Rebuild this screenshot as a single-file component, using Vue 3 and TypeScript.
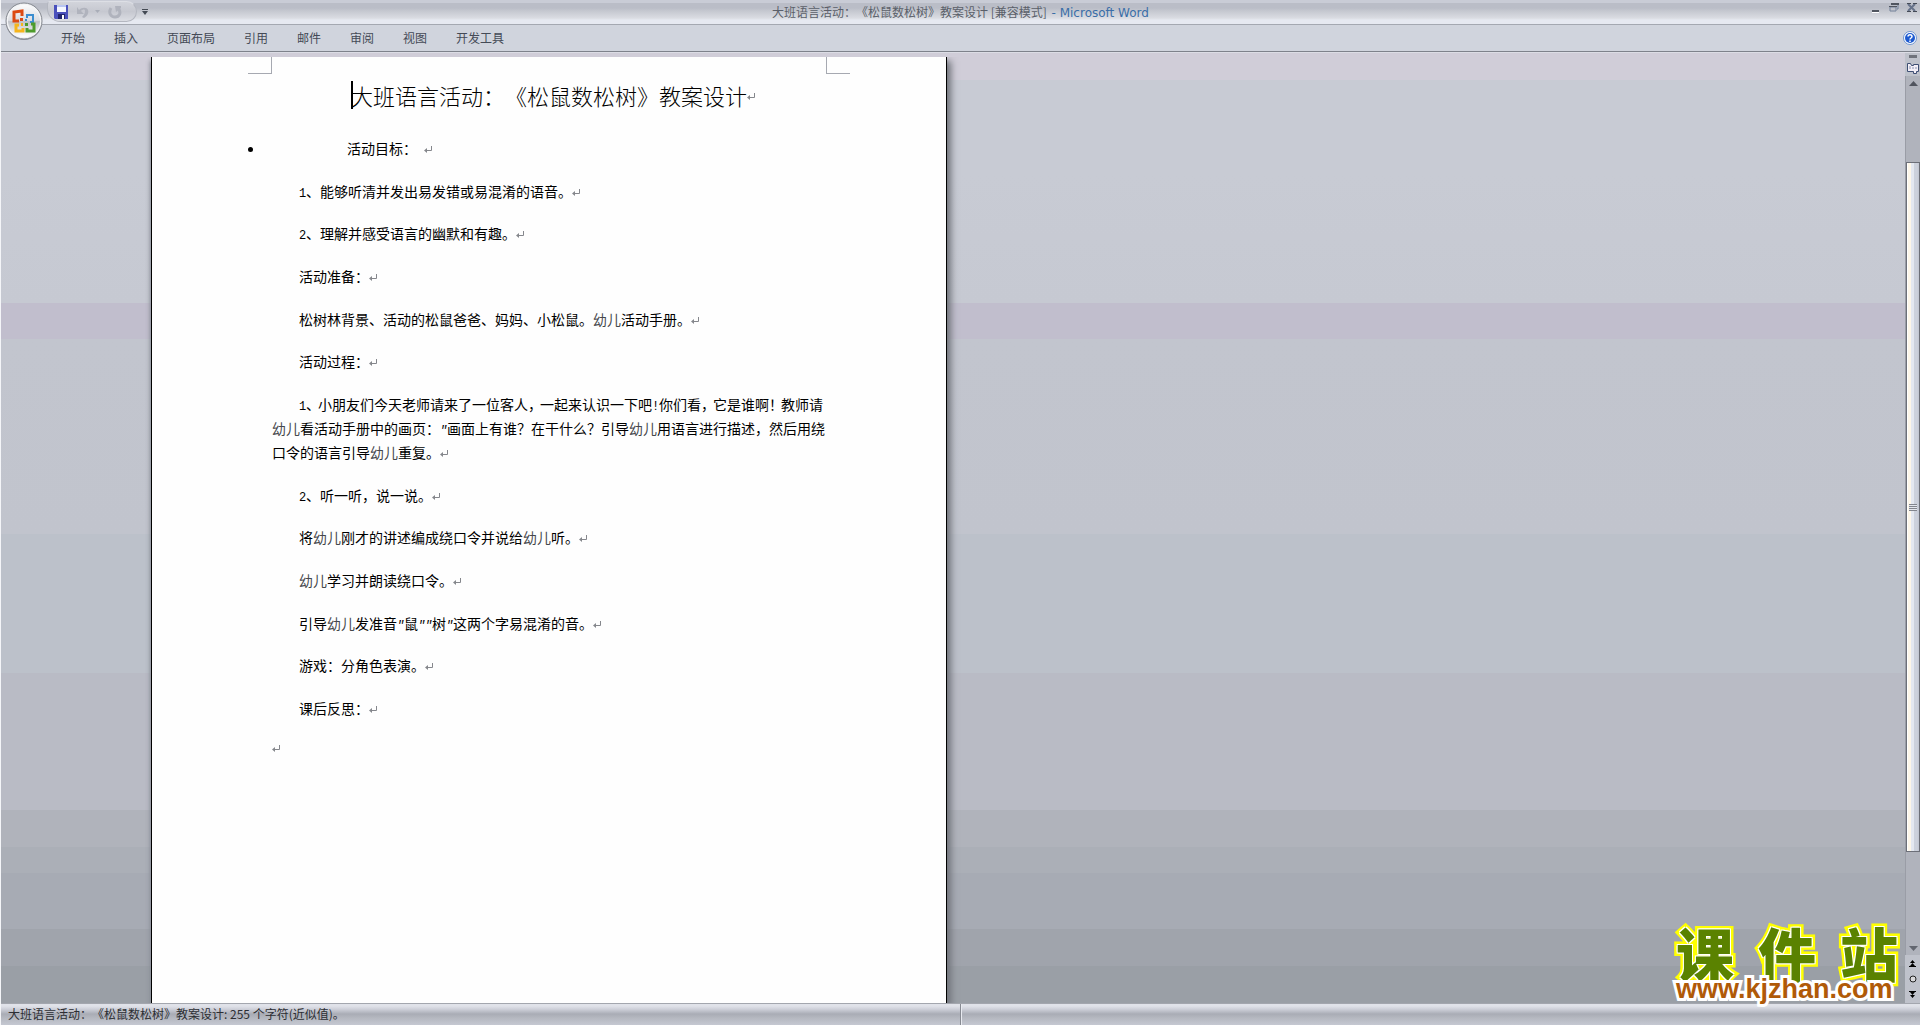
<script setup lang="ts">
interface Run {
  text: string
  kind?: 'soft' | 'half' | 'half quote' | 'tight'
}
interface Paragraph {
  lines: string[]
  flush?: boolean
}

const tabs: string[] = ['开始', '插入', '页面布局', '引用', '邮件', '审阅', '视图', '开发工具']

// A "~" after a punctuation mark asks for compressed spacing.
const paragraphs: Paragraph[] = [
  { lines: ['1、能够听清并发出易发错或易混淆的语音。'] },
  { lines: ['2、理解并感受语言的幽默和有趣。'] },
  { lines: ['活动准备：'] },
  { lines: ['松树林背景、活动的松鼠爸爸、妈妈、小松鼠。幼儿活动手册。'] },
  { lines: ['活动过程：'] },
  {
    lines: [
      '1、~小朋友们今天老师请来了一位客人，~一起来认识一下吧!你们看，~它是谁啊！~教师请',
      '幼儿看活动手册中的画页："画面上有谁？在干什么？引导幼儿用语言进行描述，然后用绕',
      '口令的语言引导幼儿重复。',
    ],
  },
  { lines: ['2、听一听，说一说。'] },
  { lines: ['将幼儿刚才的讲述编成绕口令并说给幼儿听。'] },
  { lines: ['幼儿学习并朗读绕口令。'] },
  { lines: ['引导幼儿发准音"鼠""树"这两个字易混淆的音。'] },
  { lines: ['游戏：分角色表演。'] },
  { lines: ['课后反思：'] },
  { lines: [''], flush: true },
]

function runs(line: string): Run[] {
  return line
    .split(/(幼儿|[12!"]|[、，！]~)/)
    .filter((part) => part !== '')
    .map((part): Run => {
      if (part === '幼儿') return { text: part, kind: 'soft' }
      if (part.endsWith('~')) return { text: part.slice(0, -1), kind: 'tight' }
      if (part === '"') return { text: part, kind: 'half quote' }
      if (/^[12!]$/.test(part)) return { text: part, kind: 'half' }
      return { text: part }
    })
}
</script>

<template>
  <div class="word">
    <header class="titlebar">
      <div class="quick">
        <button class="tool" aria-label="保存">
          <svg width="14" height="14" viewBox="0 0 14 14">
            <path d="M0 0h14v14H1L0 13z" fill="#4a50bc" />
            <path d="M3 0h9v7H3z" fill="#f4f7ff" />
            <path d="M3 0h9v2H3z" fill="#b9c6f2" />
            <path d="M4 9h7v5H4z" fill="#20246e" />
            <path d="M8 10h2v4H8z" fill="#fff" />
          </svg>
        </button>
        <button class="tool undo" aria-label="撤消">
          <svg width="14" height="14" viewBox="0 0 14 14">
            <path d="M1 2v7h7L5 6c2-2 4-2 4 0s-1 4-3 6l2 1c3-2 5-4 4-8-1-3-6-3-9 0z" fill="#b0b3bd" />
          </svg>
        </button>
        <svg class="caret-down" width="5" height="3" viewBox="0 0 5 3"><path d="M0 0h5L2.500 3z" fill="#a9adb8" /></svg>
        <button class="tool" aria-label="恢复">
          <svg width="14" height="14" viewBox="0 0 14 14">
            <path d="M3 3C0 8 3 12 7 12s7-4 3-9" fill="none" stroke="#b0b3bd" stroke-width="3" />
            <path d="M7 1h6v2L8 7z" fill="#b0b3bd" />
          </svg>
        </button>
      </div>
      <button class="customize" aria-label="自定义快速访问工具栏">
        <svg width="6" height="6" viewBox="0 0 6 6"><path d="M0 0h6v1H0zM0 2h6L3 6z" fill="#444a54" /></svg>
      </button>
      <div class="caption">大班语言活动：《松鼠数松树》教案设计 [兼容模式] <span class="app-name">- Microsoft Word</span></div>
      <div class="window-buttons">
        <button aria-label="最小化">
          <svg width="10" height="10" viewBox="0 0 10 10"><path d="M1 7h7v2H1z" fill="#50555f" /><path d="M1 9h7v1H1z" fill="#fff" /></svg>
        </button>
        <button aria-label="还原">
          <svg width="10" height="10" viewBox="0 0 10 10">
            <path d="M3 1h6v5H8M1 4h6v4H1z" fill="none" stroke="#74829a" />
            <path d="M2 0h8v2H2zM0 3h8v1H0z" fill="#50555f" />
          </svg>
        </button>
        <button aria-label="关闭">
          <svg width="10" height="10" viewBox="0 0 10 10"><path d="M1 1l7 7M8 1L1 8" stroke="#66728a" stroke-width="2" /><path d="M0 0h4v1H0zM6 0h4v1H6zM0 8h4v1H0zM6 8h4v1H6z" fill="#444a55" /></svg>
        </button>
      </div>
      <button class="office" aria-label="Office 按钮">
        <svg width="40" height="40" viewBox="0 0 40 40">
          <defs>
            <linearGradient id="orb" x1="0" y1="0" x2="0" y2="1">
              <stop offset="0" stop-color="#fbfbfc" />
              <stop offset=".48" stop-color="#dcdee2" />
              <stop offset=".52" stop-color="#bfc2c9" />
              <stop offset="1" stop-color="#fff" />
            </linearGradient>
          </defs>
          <circle cx="20" cy="21" r="18" fill="#8c9099" />
          <circle cx="20" cy="20" r="18" fill="#f3f4f6" stroke="#83878f" />
          <circle cx="20" cy="20" r="16" fill="url(#orb)" />
          <g fill="none" stroke-width="3">
            <path d="M18 15v-5l-8 1v9h5" stroke="#dc4a12" />
            <path d="M23 17v-3h6v7h-3" stroke="#3c8ed0" stroke-width="2" />
            <path d="M15 24h-3v6h7v-3" stroke="#f5b51c" />
            <path d="M23 27v3h7v-7h-3" stroke="#4e9c2c" />
          </g>
          <path d="M16 17h3v3h-3z" fill="#dc4a12" /><path d="M21 18h2v2h-2z" fill="#3c8ed0" />
          <path d="M17 22h2v3h-2z" fill="#f5b51c" /><path d="M21 22h3v3h-3z" fill="#4e9c2c" />
        </svg>
      </button>
    </header>

    <nav class="ribbon">
      <button v-for="tab in tabs" :key="tab" class="tab">{{ tab }}</button>
      <button class="help" aria-label="帮助">
        <svg width="14" height="14" viewBox="0 0 14 14">
          <circle cx="7" cy="7" r="6.500" fill="#fff" stroke="#6f94cf" />
          <circle cx="7" cy="7" r="5" fill="#1d5ad0" />
          <path d="M5 5.500c0-2.500 4-2.500 4 0C9 7 7 7 7 8.500M7 9.500V11" fill="none" stroke="#fff" stroke-width="1.500" />
        </svg>
      </button>
    </nav>

    <main class="workspace">
      <article class="page">
        <i class="crop left"></i>
        <i class="crop right"></i>
        <h1><span class="caret"></span>大班语言活动：《松鼠数松树》教案设计<svg class="mark end" width="8" height="8" viewBox="0 0 8 8"><use href="#return" /></svg></h1>
        <ul>
          <li>活动目标：<svg class="mark spaced" width="8" height="8" viewBox="0 0 8 8"><g id="return"><path d="M7.500 0v4.500H2" fill="none" stroke="#85878c" /><path d="M0 4.500L3 2v5z" fill="#85878c" /></g></svg></li>
        </ul>
        <p v-for="(para, p) in paragraphs" :key="p" :class="{ flush: para.flush }">
          <span v-for="(line, n) in para.lines" :key="n" class="line"><span v-for="(run, r) in runs(line)" :key="r" :class="run.kind">{{ run.text }}</span><svg v-if="n === para.lines.length - 1" class="mark" width="8" height="8" viewBox="0 0 8 8"><use href="#return" /></svg></span>
        </p>
      </article>

      <aside class="scroll">
        <div class="split"></div>
        <button class="ruler" aria-label="标尺">
          <svg width="12" height="12" viewBox="0 0 12 12"><path d="M.500 1.500h3l1 2h2v-1h5v7h-2v2h-3v-2h-6z" fill="#f3eef6" stroke="#3f4f74" /><path d="M3 4v3M6 5v2M9 5v2" stroke="#8a96b4" /></svg>
        </button>
        <div class="track">
          <button aria-label="向上滚动"><svg width="9" height="5" viewBox="0 0 9 5"><path d="M0 5h9L4.500 0z" fill="#50545e" /></svg></button>
          <div class="thumb"><span class="grip"></span></div>
          <button class="down" aria-label="向下滚动"><svg width="9" height="5" viewBox="0 0 9 5"><path d="M0 0h9L4.500 5z" fill="#62666f" /></svg></button>
        </div>
        <div class="browse">
          <button aria-label="前一页"><svg width="7" height="7" viewBox="0 0 7 7"><path d="M1 3l2.500-3L6 3zM1 6l2.500-3L6 6zM0 6h7v1H0z" /></svg></button>
          <button aria-label="选择浏览对象"><svg width="8" height="8" viewBox="0 0 8 8"><circle cx="4" cy="4" r="3" fill="#d9d9dc" stroke="#222" /></svg></button>
          <button aria-label="下一页"><svg width="7" height="7" viewBox="0 0 7 7"><path d="M1 1l2.500 3L6 1zM1 4l2.500 3L6 4zM0 0h7v1H0z" /></svg></button>
        </div>
      </aside>

      <div class="brand">
        <div class="brand-name"><span>课</span><span>件</span><span>站</span></div>
        <div class="brand-url">www.kjzhan.com</div>
      </div>
    </main>

    <footer class="status">
      <div class="status-text">大班语言活动：《松鼠数松树》教案设计: 255 个字符(近似值)。</div>
      <div class="status-rest"></div>
    </footer>
  </div>
</template>

<style>
body {
  margin: 0;
}
</style>

<style scoped>
.word {
  display: flex;
  flex-direction: column;
  min-height: 100vh;
  box-sizing: border-box;
  border-left: 1px solid #f4f5f8;
  font: 12px/16px "Noto Sans CJK SC", sans-serif;
  text-spacing-trim: space-all;
  color: #444a56;
}
button {
  padding: 0;
  border: 0;
  background: none;
  font: inherit;
  color: inherit;
}
svg {
  display: block;
}
.titlebar {
  position: relative;
  display: flex;
  align-items: flex-start;
  height: 24px;
  padding-left: 46px;
  border-bottom: 1px solid #a4a8b1;
  background: linear-gradient(#c9ccd6 0 3px, #babdc7 3px 8px, #c5c8d0 11px, #dadce2 18px, #e6e9f1 20px 24px);
}
.quick {
  display: flex;
  align-items: center;
  box-sizing: border-box;
  width: 90px;
  height: 21px;
  margin-top: 1px;
  padding-left: 6px;
  border: 1px solid #b4b7c0;
  border-top-color: #dddfe5;
  border-radius: 4px 11px 11px 14px;
  background: linear-gradient(#d2d4db, #c6c8d0 50%, #dbdde3);
}
.undo {
  margin-left: 8px;
}
.caret-down {
  margin: 0 8px 0 5px;
}
.customize {
  margin: 9px 0 0 5px;
}
.caption {
  position: absolute;
  inset: 4px 0 auto;
  text-align: center;
  color: #5a5f69;
  pointer-events: none;
}
.app-name {
  font: 13px/16px "DejaVu Sans", sans-serif;
  font-size: 12px;
  margin-left: 2px;
  color: #3a6ea8;
}
.window-buttons {
  display: flex;
  gap: 8px;
  margin: 3px 3px 0 auto;
}
.office {
  position: absolute;
  left: 3px;
  top: 1px;
  z-index: 2;
}
.ribbon {
  display: flex;
  align-items: center;
  gap: 29px;
  height: 26px;
  padding: 0 3px 0 60px;
  border-bottom: 1px solid #7e828b;
  background: #d0d4dd;
}
.help {
  margin-left: auto;
}
.workspace {
  position: relative;
  flex: 1;
  display: flex;
  padding: 4px 0 0 150px;
  border-top: 1px solid #dcdde5;
  background: linear-gradient(
    #d0cdd8 0 27px, #c8cbd4 27px 120px, #c6c9d2 250px, #c1becd 250px 286px, #c2c5ce 286px,
    #c1c4cd 481px, #bcc1ca 481px 620px, #b9bbc5 620px 757px, #b0b3bb 757px 794px,
    #abafb7 794px 820px, #a7abb4 820px 876px, #a0a4ac 876px 913px, #9a9fa6 913px);
}
.page {
  position: relative;
  box-sizing: border-box;
  width: 796px;
  padding: 24px 120px;
  border: solid #000;
  border-width: 0 1px;
  background: #fefefe;
  box-shadow: 4px 4px 7px #70737a, -1px 4px 4px #8d919b;
  clip-path: inset(0 -14px 0 -7px);
  font-size: 14px;
  line-height: 24px;
  color: #000;
}
.crop {
  position: absolute;
  top: 0;
  width: 23px;
  height: 16px;
  border-bottom: 1px solid #a6a9b1;
}
.crop.left {
  left: 96px;
  border-right: 1px solid #a6a9b1;
}
.crop.right {
  right: 96px;
  border-left: 1px solid #a6a9b1;
}
h1 {
  display: flex;
  justify-content: center;
  align-items: center;
  margin: 0 0 27px;
  font-size: 22px;
  font-weight: 300;
  line-height: 28px;
  color: #000;
  white-space: nowrap;
}
.caret {
  width: 2px;
  height: 28px;
  margin-right: -2px;
  background: #000;
}
ul,
p {
  margin: 0 0 19px;
}
ul {
  padding: 0;
  list-style: none;
}
li {
  display: flex;
  align-items: center;
  margin-left: -24px;
}
li::before {
  content: "";
  width: 5px;
  height: 5px;
  margin: 2px 94px 0 0;
  border-radius: 50%;
  background: #000;
}
p:nth-of-type(3n + 1) {
  margin-bottom: 18px;
}
p .line:first-child {
  padding-left: 27px;
}
p.flush .line {
  padding-left: 0;
}
p:nth-last-of-type(2) {
  margin-bottom: 15px;
}
.line {
  display: flex;
  align-items: baseline;
  height: 24px;
  white-space: nowrap;
}
.soft {
  color: #45474b;
}
.half {
  width: 7px;
  font: 12px/16px "Liberation Mono", monospace;
}
.quote {
  font-style: italic;
}
.tight {
  margin-right: -2px;
}
.mark {
  flex: none;
  align-self: center;
  margin-top: 3px;
}
.mark.spaced {
  margin-left: 7px;
}
.mark.end {
  margin-right: -8px;
}
.scroll {
  display: flex;
  flex-direction: column;
  width: 15px;
  margin: -4px 0 0 auto;
  background: #bfc2cb;
}
.split {
  height: 3px;
  margin: 2px 3px 2px 4px;
  background: #6f727b;
}
.ruler {
  display: flex;
  align-items: center;
  justify-content: center;
  height: 16px;
}
.track {
  flex: 1;
  display: flex;
  flex-direction: column;
  border-left: 1px solid #9a9da6;
  background: #b0b3bc;
}
.track button {
  display: flex;
  justify-content: center;
  padding: 5px 0 4px;
}
.thumb {
  flex: 0 1 688px;
  display: flex;
  align-items: center;
  justify-content: center;
  margin-top: 72px;
  border: 1px solid #6c6f78;
  background: linear-gradient(90deg, #fff 0 1px, #fdf6e8 1px 4px, #e4e8f0 4px 7px, #ccd1dc 7px 10px, #c1c5d0);
}
.grip {
  width: 8px;
  height: 7px;
  background: repeating-linear-gradient(#82858d 0 1px, #e4e7ee 1px 2px);
}
.down {
  margin-top: auto;
}
.browse {
  display: flex;
  flex-direction: column;
  align-items: center;
  justify-content: space-between;
  height: 38px;
  padding: 5px 0;
}
.brand {
  position: absolute;
  right: 22px;
  bottom: 0;
  width: 222px;
  font-weight: 900;
  white-space: nowrap;
}
.brand-name {
  display: flex;
  justify-content: space-between;
  font-size: 58px;
  line-height: 46px;
  color: #5a8200;
  -webkit-text-stroke: 7px #ff0;
  paint-order: stroke fill;
  text-shadow: 1px 1px #fff, -1px -1px #fff, 1px -1px #fff, -1px 1px #fff;
}
.brand-url {
  position: relative;
  font: bold 27px/28px "Liberation Sans", sans-serif;
  color: #b05a08;
  -webkit-text-stroke: 6px #fff;
  paint-order: stroke fill;
}
.status {
  display: flex;
  height: 21px;
  border-top: 1px solid #a3a6ae;
  background: linear-gradient(#e0e2e9 0 2px, #cfd1da 5px, #b8bbc4 8px, #a9acb5 10px, #b5b8c0 14px, #c5c8d2);
  color: #2c2e33;
}
.status-text {
  flex: 1;
  border-right: 1px solid #878a92;
  line-height: 20px;
  text-indent: 7px;
}
.status-rest {
  flex: 1;
  border-left: 1px solid #e8eaf0;
}
</style>
